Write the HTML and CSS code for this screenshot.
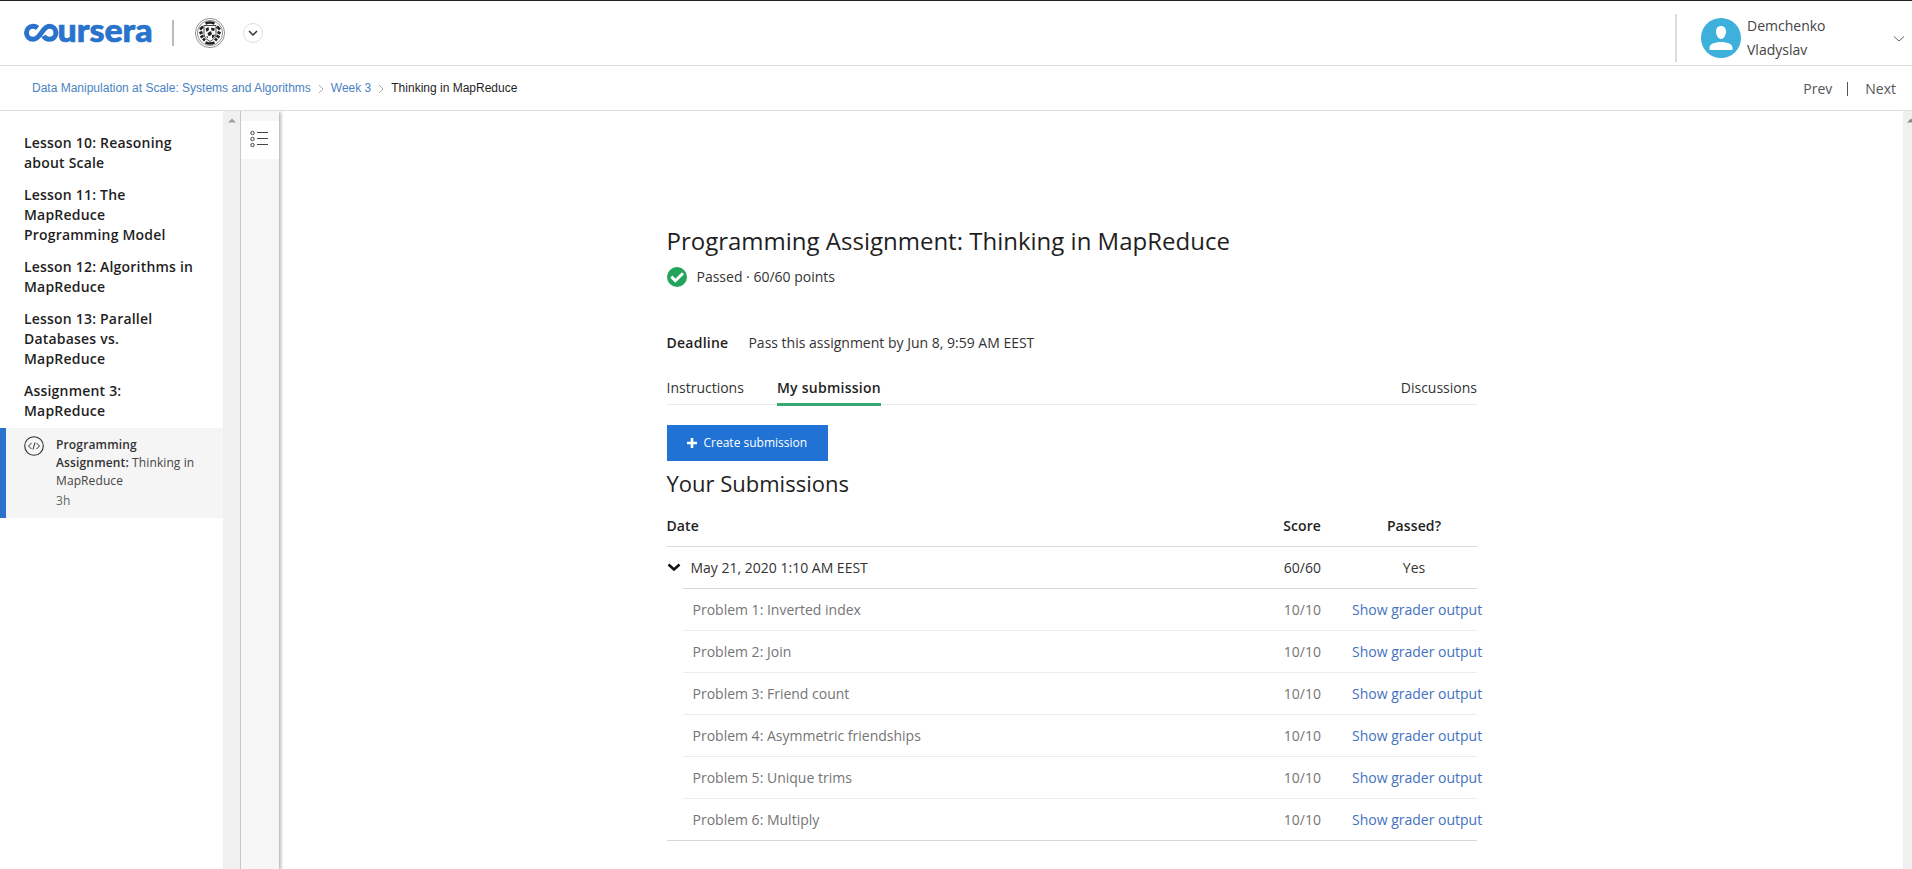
FILE: index.html
```html
<!DOCTYPE html>
<html lang="en">
<head>
<meta charset="utf-8">
<title>Programming Assignment: Thinking in MapReduce | Coursera</title>
<link rel="stylesheet" href="styles.css">
</head>
<body>
<header class="topbar">
  <div class="brand">
    <svg class="logo" width="128" height="20" viewBox="0 0 128 20">
      <path d="M13.600 5C12.200 3.800 10.600 3.300 9 3.300C5.300 3.300 2.500 6.100 2.500 9.800C2.500 13.500 5.300 16.200 9 16.200C17 16.200 18 3.300 25.500 3.300C29.200 3.300 31.900 6.100 31.900 9.800C31.900 13.500 29.200 16.200 25.500 16.200C22.800 16.200 20.700 15 19.600 12.800" fill="none" stroke="#2a73cc" stroke-width="5"/>
      <text class="logo-text" x="33.500" y="18.500" textLength="95" lengthAdjust="spacingAndGlyphs">ursera</text>
    </svg>
    <span class="brand-divider"></span>
    <svg class="seal" width="32" height="32" viewBox="0 0 32 32">
      <circle cx="16" cy="16" r="14.600" fill="#fff" stroke="#777" stroke-width=".8"/>
      <circle cx="16" cy="16" r="12.600" fill="#fff" stroke="#777" stroke-width=".8"/>
      <path d="M11.500 6.500Q16 4.500 20.500 6.500M6 12.500l3-3M5.500 16.500l3-1.500M6.500 20.500l3-2M9 23.500l2-2M26 12.500l-3-3M26.500 16.500l-3-1.500M25.500 20.500l-3-2M23 23.500l-2-2M11.500 25.500Q16 27.500 20.500 25.500" fill="none" stroke="#222" stroke-width="2.600"/>
      <path d="M10 8.500h12v8c0 4-3 6-6 8c-3-2-6-4-6-8z" fill="#fff" stroke="#333" stroke-width=".9"/>
      <path d="M11.500 11.500l3-1.500.5 3-2.500 2zM17 10.500l4 1-1 2.500-2.500-.5zM13.500 16l3.500-2 1 3-2 2-2-.5zM12 19l2 .5v2zM18 18l3-.5-1 2.500-2 1.500z" fill="#222"/>
    </svg>
    <svg class="org-toggle" width="20" height="20" viewBox="0 0 20 20"><circle cx="10" cy="10" r="9.500" fill="#fff" stroke="#ddd"/><path d="M6 8l4 4 4-4" fill="none" stroke="#333" stroke-width="1.500"/></svg>
  </div>
  <div class="user">
    <svg width="40" height="40" viewBox="0 0 40 40"><circle cx="20" cy="20" r="20" fill="#3eb0dc"/><path d="M20 8c3.200 0 5 2.300 5 5.600S23 21 20 21s-5-4-5-7.400S16.800 8 20 8zM8.500 32v-2.300c0-3.500 5-5.700 11.500-5.700s11.500 2.200 11.500 5.700V32z" fill="#fff"/></svg>
    <span class="user-name">Demchenko Vladyslav</span>
    <svg class="user-chevron" width="12" height="8" viewBox="0 0 12 8"><path d="M1 1.500l5 4.500 5-4.500" fill="none" stroke="#666"/></svg>
  </div>
</header>
<nav class="crumbs">
  <div class="trail">
    <a>Data Manipulation at Scale: Systems and Algorithms</a>
    <svg width="6" height="10" viewBox="0 0 6 10"><path d="M1 1l4 4-4 4" fill="none" stroke="#aaa"/></svg>
    <a>Week 3</a>
    <svg width="6" height="10" viewBox="0 0 6 10"><path d="M1 1l4 4-4 4" fill="none" stroke="#aaa"/></svg>
    <span>Thinking in MapReduce</span>
  </div>
  <div class="pager"><span>Prev</span><i></i><span>Next</span></div>
</nav>
<div class="body">
  <aside class="sidebar">
    <h3>Lesson 10: Reasoning about Scale</h3>
    <h3>Lesson 11: The MapReduce Programming Model</h3>
    <h3>Lesson 12: Algorithms in MapReduce</h3>
    <h3>Lesson 13: Parallel Databases vs. MapReduce</h3>
    <h3>Assignment 3: MapReduce</h3>
    <div class="active-item">
      <svg width="20" height="20" viewBox="0 0 20 20" fill="none" stroke="#333"><circle cx="10" cy="10" r="9.300" stroke-width="1.100"/><path d="M7.500 7l-3 3 3 3M12.500 7l3 3-3 3M11 6.500l-2 7"/></svg>
      <div class="active-text"><p><b>Programming Assignment:</b> Thinking in MapReduce</p><p class="time">3h</p></div>
    </div>
  </aside>
  <div class="scroll scroll-left"><svg width="8" height="5" viewBox="0 0 8 5"><path d="M0 4.500L4 .5l4 4z" fill="#a0a0a0"/></svg></div>
  <div class="rail">
    <div class="rail-btn"><svg width="18" height="18" viewBox="0 0 18 18" fill="none" stroke="#444"><circle cx="2.500" cy="3" r="1.700"/><circle cx="2.500" cy="9" r="1.700"/><circle cx="2.500" cy="15" r="1.700"/><path d="M7 2.500h11M7 8.500h11M7 14.500h11"/></svg></div>
  </div>
  <main class="main">
    <div class="content">
      <h1>Programming Assignment: Thinking in MapReduce</h1>
      <div class="status"><svg width="20" height="20" viewBox="0 0 20 20"><circle cx="10" cy="10" r="10" fill="#22a45d"/><path d="M4.300 9.600l4.100 4.100 7.600-7.500" fill="none" stroke="#fff" stroke-width="3"/></svg><span>Passed · 60/60 points</span></div>
      <div class="deadline"><b>Deadline</b><span>Pass this assignment by Jun 8, 9:59 AM EEST</span></div>
      <div class="tabs"><span>Instructions</span><span class="tab-on">My submission</span><span class="tab-last">Discussions</span></div>
      <div class="create"><svg width="10" height="10" viewBox="0 0 10 10"><path d="M5 0v10M0 5h10" stroke="#fff" stroke-width="2.600"/></svg><span>Create submission</span></div>
      <h2>Your Submissions</h2>
      <div class="table">
        <div class="row head"><span>Date</span><span class="score">Score</span><span class="result">Passed?</span></div>
        <div class="row attempt"><svg width="14" height="9" viewBox="0 0 14 9"><path d="M1.500 1.500L7 6.500l5.500-5" fill="none" stroke="#111" stroke-width="2.500"/></svg><span>May 21, 2020 1:10 AM EEST</span><span class="score">60/60</span><span class="result">Yes</span></div>
        <div class="problems">
          <div class="row"><span>Problem 1: Inverted index</span><span class="score">10/10</span><a class="result">Show grader output</a></div>
          <div class="row"><span>Problem 2: Join</span><span class="score">10/10</span><a class="result">Show grader output</a></div>
          <div class="row"><span>Problem 3: Friend count</span><span class="score">10/10</span><a class="result">Show grader output</a></div>
          <div class="row"><span>Problem 4: Asymmetric friendships</span><span class="score">10/10</span><a class="result">Show grader output</a></div>
          <div class="row"><span>Problem 5: Unique trims</span><span class="score">10/10</span><a class="result">Show grader output</a></div>
          <div class="row"><span>Problem 6: Multiply</span><span class="score">10/10</span><a class="result">Show grader output</a></div>
        </div>
      </div>
    </div>
  </main>
  <div class="scroll scroll-right"><svg width="8" height="5" viewBox="0 0 8 5"><path d="M0 4.500L4 .5l4 4z" fill="#8a8a8a"/></svg></div>
</div>
</body>
</html>
```
FILE: styles.css
```css
* { box-sizing: border-box; }
body { margin: 0; height: 869px; display: flex; flex-direction: column; overflow: hidden; background: #fff; color: #1f1f1f; font: 14px/20px "Open Sans", sans-serif; }
h1, h2, h3, p { margin: 0; }
svg { display: block; flex: none; }
a { color: #4472c0; }
b { font-weight: 600; letter-spacing: .15px; }

.topbar { height: 66px; flex: none; display: flex; justify-content: space-between; border-top: 1px solid #222; border-bottom: 1px solid #ddd; }
.brand { display: flex; align-items: center; padding-left: 24px; height: 64px; }
.logo { overflow: visible; }
.logo-text { font: 900 33px Lato, sans-serif; fill: #2a73cc; stroke: #2a73cc; stroke-width: .7px; }
.brand-divider { width: 2px; height: 26px; margin: 0 21px 0 20px; background: #bbb; }
.seal { margin-left: -1px; }
.org-toggle { margin-left: 17px; }
.user { display: flex; align-items: flex-start; width: 237px; height: 48px; margin-top: 13px; padding-left: 24px; border-left: 2px solid #ddd; }
.user svg:first-child { margin-top: 4px; }
.user-name { width: 84px; margin-left: 6px; font-size: 14px; line-height: 24px; color: #444; }
.user-chevron { margin: 21px 0 0 62px; }

.crumbs { height: 45px; flex: none; display: flex; justify-content: space-between; align-items: center; padding: 0 16px 0 32px; border-bottom: 1px solid #ddd; }
.trail { display: flex; align-items: center; gap: 7px; font: 12px/16px "Liberation Sans", sans-serif; white-space: nowrap; }
.trail a { color: #4a83c3; }
.trail svg { margin-top: 2px; }
.pager { display: flex; align-items: center; padding-top: 2px; color: #555; }
.pager i { width: 1px; height: 14px; margin: 0 17px 0 15px; background: #555; }

.body { flex: 1; min-height: 0; display: flex; }
.sidebar { width: 223px; flex: none; padding-top: 22px; }
.sidebar h3 { width: 197px; margin-bottom: 12px; padding-left: 24px; font-size: 14px; line-height: 20px; font-weight: 600; letter-spacing: .2px; }
.active-item { display: flex; gap: 12px; height: 90px; margin-top: -5px; padding: 8px 20px 0 18px; border-left: 6px solid #2a73cc; background: #f5f5f5; font-size: 12px; line-height: 18px; letter-spacing: .1px; color: #444; }
.active-item b { color: #333; }
.time { margin-top: 2px; color: #666; }
.scroll { flex: none; background: #f0f0f0; }
.scroll-left { width: 17px; padding: 7px 0 0 5px; }
.scroll-right { width: 9px; padding: 7px 0 0 4px; overflow: hidden; }
.rail { width: 39px; flex: none; padding-top: 10px; border-left: 1px solid #c8c8c8; background: #f6f6f6; box-shadow: 2px 1px 3px 0 #b8b8b8; clip-path: inset(0 -8px 0 0); }
.rail-btn { height: 38px; padding: 9px 0 0 9px; background: #fff; }

.main { flex: 1; }
.content { width: 811px; margin-left: 388px; padding: 112px 1px 0 0; }
.content > * { margin-left: -.5px; }
h1 { font-size: 24px; line-height: 36px; font-weight: 400; white-space: nowrap; }
.status { display: flex; align-items: center; gap: 10px; height: 20px; margin-top: 8px; color: #333; }
.status svg { margin-top: -1px; }
.deadline { display: flex; gap: 20px; margin-top: 46px; color: #333; }
.deadline b { color: #1f1f1f; letter-spacing: .25px; }
.tabs { display: flex; gap: 33px; height: 30px; margin-top: 22px; border-bottom: 1px solid #eaeaea; line-height: 25px; color: #333; }
.tab-on { height: 31px; border-bottom: 3px solid #35a873; color: #1f1f1f; font-weight: 600; letter-spacing: .26px; }
.tab-last { margin-left: auto; }
.create { display: flex; align-items: center; gap: 7px; width: 161px; height: 36px; margin-top: 20px; padding-left: 20px; background: #2073d4; color: #fff; font-size: 12px; }
.create svg { margin-top: -1px; }
h2 { margin: 7px 0 1px; font-size: 22px; line-height: 30px; font-weight: 400; }
.row { display: flex; align-items: center; height: 42px; border-bottom: 1px solid #ececec; white-space: nowrap; }
.score { margin-left: auto; }
.result { width: 126px; margin-left: 30px; text-align: center; }
.head { height: 48px; padding-top: 6px; border-color: #d8d8d8; font-weight: 600; letter-spacing: .1px; }
.attempt { height: 41px; color: #333; border: 0; }
.attempt svg { margin-right: 10px; }
.problems { border-bottom: 1px solid #d8d8d8; }
.problems .row { margin-left: 16px; padding-left: 10px; color: #757575; }
.problems .row:first-child { height: 43px; border-top: 1px solid #d8d8d8; }
.problems .row:last-child { height: 41px; border-bottom: 0; }
.problems .result { text-align: left; padding-left: 1px; }
```
